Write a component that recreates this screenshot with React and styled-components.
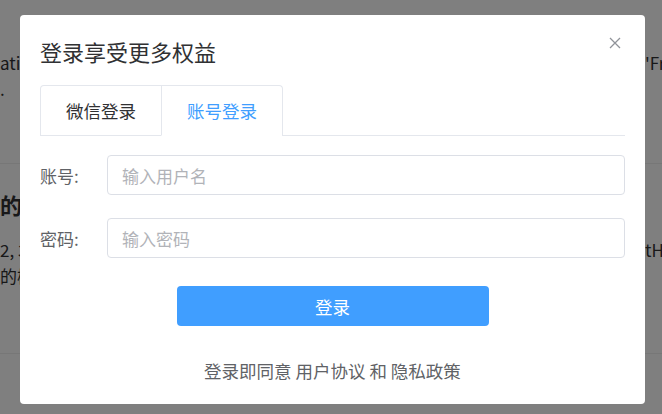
import React from 'react';
import styled, { createGlobalStyle } from 'styled-components';

const GlobalStyle = createGlobalStyle`
  html, body {
    margin: 0;
    padding: 0;
    background: #fff;
    font-family: "Noto Sans CJK SC", "Noto Sans", "Liberation Sans", sans-serif;
  }
  * { box-sizing: border-box; }
`;

const Page = styled.div`
  width: 662px;
  height: 414px;
  overflow: hidden;
  color: #303133;
`;

const PageSection = styled.section`
  height: ${p => p.height}px;
  padding-top: ${p => p.pad}px;
  border-bottom: 1px solid #eeeeee;
`;

const Line = styled.div`
  display: flex;
  white-space: nowrap;
  font-size: ${p => p.size || 17}px;
  font-weight: ${p => (p.bold ? 700 : 400)};
  line-height: ${p => p.lh || 26}px;
  margin-top: ${p => p.mt || 0}px;
`;

const LeftText = styled.span`
  width: 30px;
  overflow: hidden;
`;

const RightText = styled.span`
  margin-left: auto;
  width: 17px;
  overflow: hidden;
`;

const Overlay = styled.div`
  position: fixed;
  inset: 0;
  background: rgba(0, 0, 0, 0.5);
  display: flex;
  align-items: flex-start;
  padding: 15px 0 0 20px;
`;

const Modal = styled.div`
  position: relative;
  width: 625px;
  height: 389px;
  background: #fff;
  border-radius: 4px;
  padding: 20px 20px 0 20px;
  display: flex;
  flex-direction: column;
`;

const Title = styled.h2`
  margin: 0;
  font-size: 22px;
  font-weight: 400;
  line-height: 32px;
  color: #303133;
`;

const CloseButton = styled.button`
  position: absolute;
  top: 20px;
  right: 22px;
  width: 16px;
  height: 16px;
  padding: 0;
  border: 0;
  background: none;
  color: #909399;
  cursor: pointer;
  display: flex;
  align-items: center;
  justify-content: center;
`;

const TabBar = styled.div`
  margin-top: 18px;
  border-bottom: 1px solid #e4e7ed;
  display: flex;
`;

const TabNav = styled.div`
  display: flex;
  border: 1px solid #e4e7ed;
  border-bottom: none;
  border-radius: 4px 4px 0 0;
  margin-bottom: -1px;
`;

const Tab = styled.div`
  height: 50px;
  padding: 0 25px;
  display: flex;
  align-items: center;
  font-size: 17.5px;
  color: ${p => (p.active ? '#409eff' : '#303133')};
  border-left: ${p => (p.first ? 'none' : '1px solid #e4e7ed')};
  border-bottom: 1px solid ${p => (p.active ? '#fff' : 'transparent')};
  cursor: pointer;
`;

const Form = styled.form`
  padding-top: 19px;
  display: flex;
  flex-direction: column;
`;

const FormRow = styled.div`
  display: flex;
  align-items: center;
  margin-bottom: 23px;
`;

const Label = styled.label`
  width: 67px;
  font-size: 17px;
  color: #606266;
`;

const Input = styled.input`
  flex: 1;
  height: 40px;
  border: 1px solid #dcdfe6;
  border-radius: 4px;
  padding: 0 14px;
  font-family: inherit;
  font-size: 17px;
  color: #606266;
  outline: none;
  &::placeholder {
    color: #b1b3b8;
  }
`;

const SubmitButton = styled.button`
  align-self: center;
  width: 312px;
  height: 40px;
  margin-top: 5px;
  border: 0;
  border-radius: 4px;
  background: #409eff;
  color: #fff;
  font-family: inherit;
  font-size: 17.5px;
  cursor: pointer;
`;

const Agreement = styled.p`
  margin: 33px 0 0;
  text-align: center;
  font-size: 17.5px;
  line-height: 24px;
  color: #606266;
`;

const CloseIcon = () => (
  <svg width="12" height="12" viewBox="0 0 12 12" fill="none" stroke="currentColor" strokeWidth="1.3">
    <path d="M1 1 L11 11 M11 1 L1 11" />
  </svg>
);

const App = () => {
  return (
    <>
      <GlobalStyle />
      <Page>
        <PageSection height={164} pad={50}>
          <Line>
            <LeftText>ation</LeftText>
            <RightText>'Framework</RightText>
          </Line>
          <Line>
            <LeftText>.</LeftText>
          </Line>
        </PageSection>
        <PageSection height={190} pad={25}>
          <Line size={22} bold lh={30}>
            <LeftText>的特点</LeftText>
          </Line>
          <Line mt={18}>
            <LeftText>2, 3</LeftText>
            <RightText>tHTML</RightText>
          </Line>
          <Line>
            <LeftText>的模式</LeftText>
          </Line>
        </PageSection>
      </Page>
      <Overlay>
        <Modal>
          <Title>登录享受更多权益</Title>
          <CloseButton aria-label="关闭">
            <CloseIcon />
          </CloseButton>
          <TabBar>
            <TabNav>
              <Tab first>微信登录</Tab>
              <Tab active>账号登录</Tab>
            </TabNav>
          </TabBar>
          <Form onSubmit={e => e.preventDefault()}>
            <FormRow>
              <Label>账号:</Label>
              <Input placeholder="输入用户名" />
            </FormRow>
            <FormRow>
              <Label>密码:</Label>
              <Input type="password" placeholder="输入密码" />
            </FormRow>
            <SubmitButton type="submit">登录</SubmitButton>
          </Form>
          <Agreement>登录即同意 用户协议 和 隐私政策</Agreement>
        </Modal>
      </Overlay>
    </>
  );
};

export default App;
